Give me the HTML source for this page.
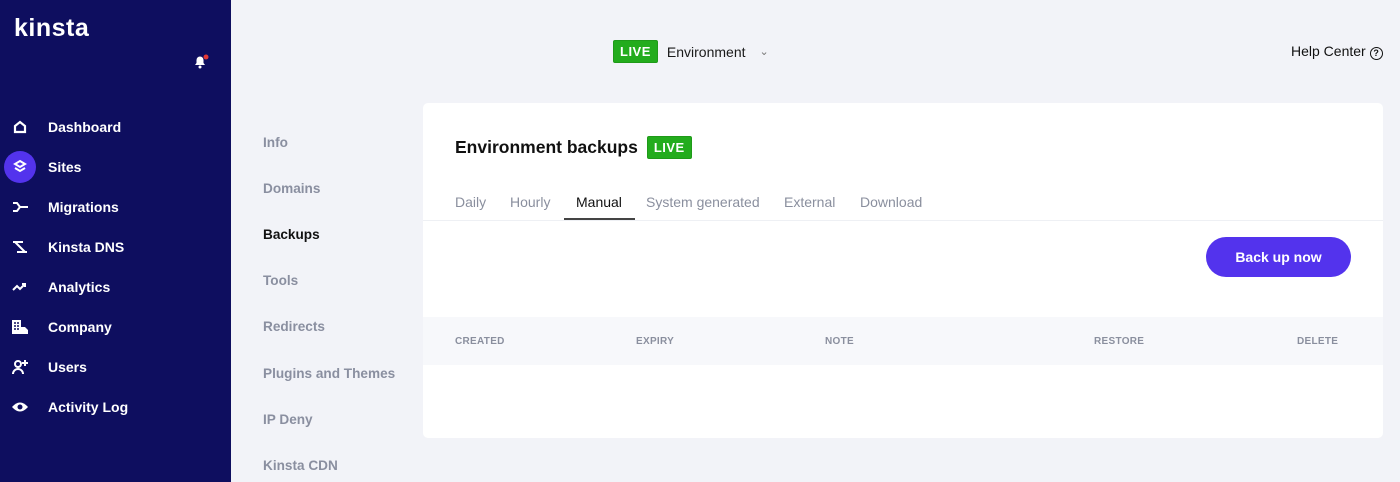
<!DOCTYPE html>
<html><head><style>
*{margin:0;padding:0;box-sizing:border-box}
body{width:1400px;height:482px;overflow:hidden;background:#f2f3f8;font-family:"Liberation Sans",sans-serif;position:relative}
.sb{position:absolute;left:0;top:0;width:231px;height:482px;background:#0e0e5f;color:#fff}
.logo{position:absolute;left:14px;top:14px;font-size:25px;font-weight:bold;letter-spacing:0.5px;color:#fff}
.nav{position:absolute;left:48px;font-size:14px;font-weight:bold;color:#fff;margin-top:1px}
.ic{position:absolute;left:11px;width:18px;height:18px}
.sub{position:absolute;left:263px;font-size:13.6px;font-weight:bold;color:#8a8fa0}
.card{position:absolute;left:423px;top:103px;width:960px;height:335px;background:#fff;border-radius:5px}
.live{display:inline-block;background:#23ac1d;color:#fff;font-weight:bold;font-size:13px;padding:3px 6px;border:1px solid #1f9a19;border-radius:2px;letter-spacing:.5px}
.tab{position:absolute;top:91px;font-size:14px;color:#8a8f9e}
.th{position:absolute;top:233px;font-size:10px;color:#8a8f9e;font-weight:bold;letter-spacing:.3px}
</style></head><body>
<div class="sb">
<div class="logo">kinsta</div>
<svg style="position:absolute;left:193px;top:54px" width="18" height="16" viewBox="0 0 18 16"><path d="M2 11h10l-1.5-2V6a3.5 3.5 0 0 0-7 0v3z" fill="#fff"/><circle cx="7" cy="13" r="1.5" fill="#fff"/><circle cx="13" cy="3" r="2.5" fill="#e53935"/></svg>
<svg class="ic" style="top:118px" viewBox="0 0 18 18"><path d="M4 14V8l5-4 5 4v6z" fill="none" stroke="#fff" stroke-width="2.2"/></svg>
<div style="position:absolute;left:4px;top:151px;width:32px;height:32px;border-radius:50%;background:#5333ed"></div>
<svg class="ic" style="top:158px" viewBox="0 0 18 18"><path d="M9 3l5 3-5 3-5-3z M4 10l5 3 5-3" fill="none" stroke="#fff" stroke-width="2"/></svg>
<svg class="ic" style="top:198px" viewBox="0 0 18 18"><path d="M2 5h4l3 4-3 4H2M9 9h8" fill="none" stroke="#fff" stroke-width="2"/></svg>
<svg class="ic" style="top:238px" viewBox="0 0 18 18"><path d="M2 4h10M6 14h10M4 4l10 10" fill="none" stroke="#fff" stroke-width="2"/></svg>
<svg class="ic" style="top:278px" viewBox="0 0 18 18"><path d="M2 12l4-4 3 3 5-5M11 6h3v3" fill="none" stroke="#fff" stroke-width="2"/></svg>
<svg class="ic" style="top:318px" viewBox="0 0 18 18"><path d="M1 2h9v14H1zM10 9h4l3 3v4h-7z" fill="#fff"/><path d="M3 5h2M6 5h2M3 8h2M6 8h2M3 11h2M6 11h2" stroke="#0e0e5f" stroke-width="1.5"/></svg>
<svg class="ic" style="top:358px" viewBox="0 0 18 18"><circle cx="7" cy="6" r="3" fill="none" stroke="#fff" stroke-width="2"/><path d="M2 16a5 5 0 0 1 10 0M14 2v6M11 5h6" fill="none" stroke="#fff" stroke-width="2"/></svg>
<svg class="ic" style="top:398px" viewBox="0 0 18 18"><path d="M1 9q8-9 16 0q-8 9-16 0z" fill="#fff"/><circle cx="9" cy="9" r="2.5" fill="#0e0e5f"/></svg>
<div class="nav" style="top:118px">Dashboard</div>
<div class="nav" style="top:158px">Sites</div>
<div class="nav" style="top:198px">Migrations</div>
<div class="nav" style="top:238px">Kinsta DNS</div>
<div class="nav" style="top:278px">Analytics</div>
<div class="nav" style="top:318px">Company</div>
<div class="nav" style="top:358px">Users</div>
<div class="nav" style="top:398px">Activity Log</div>
</div>
<div style="position:absolute;left:613px;top:40px;display:flex;align-items:center;font-size:14px;color:#1a1a1a"><span class="live">LIVE</span><span style="margin-left:9px">Environment</span><span style="margin-left:14px;color:#777;font-size:11px">&#8964;</span></div>
<div style="position:absolute;left:1291px;top:43px;font-size:14px;color:#111">Help Center <span style="display:inline-block;width:13px;height:13px;border:1.5px solid #111;border-radius:50%;font-size:9px;text-align:center;line-height:10px;font-weight:bold">?</span></div>
<div class="sub" style="top:135px">Info</div>
<div class="sub" style="top:181px">Domains</div>
<div class="sub" style="top:227px;color:#111">Backups</div>
<div class="sub" style="top:273px">Tools</div>
<div class="sub" style="top:319px">Redirects</div>
<div class="sub" style="top:366px">Plugins and Themes</div>
<div class="sub" style="top:412px">IP Deny</div>
<div class="sub" style="top:458px">Kinsta CDN</div>
<div class="card">
<div style="position:absolute;left:32px;top:33px;display:flex;align-items:center;font-size:17.5px;font-weight:bold;color:#111">Environment backups<span class="live" style="margin-left:9px">LIVE</span></div>
<div class="tab" style="left:32px">Daily</div>
<div class="tab" style="left:87px">Hourly</div>
<div class="tab" style="left:153px;color:#111">Manual</div>
<div style="position:absolute;left:141px;top:115px;width:71px;height:2px;background:#444"></div>
<div class="tab" style="left:223px">System generated</div>
<div class="tab" style="left:361px">External</div>
<div class="tab" style="left:437px">Download</div>
<div style="position:absolute;left:0;top:117px;width:960px;height:1px;background:#eef0f4"></div>
<div style="position:absolute;left:783px;top:134px;width:145px;height:40px;border-radius:20px;background:#5333ed;color:#fff;font-weight:bold;font-size:14px;text-align:center;line-height:40px">Back up now</div>
<div style="position:absolute;left:0;top:214px;width:960px;height:48px;background:#f7f8fb"></div>
<div class="th" style="left:32px">CREATED</div>
<div class="th" style="left:213px">EXPIRY</div>
<div class="th" style="left:402px">NOTE</div>
<div class="th" style="left:671px">RESTORE</div>
<div class="th" style="left:874px">DELETE</div>
</div>
</body></html>
